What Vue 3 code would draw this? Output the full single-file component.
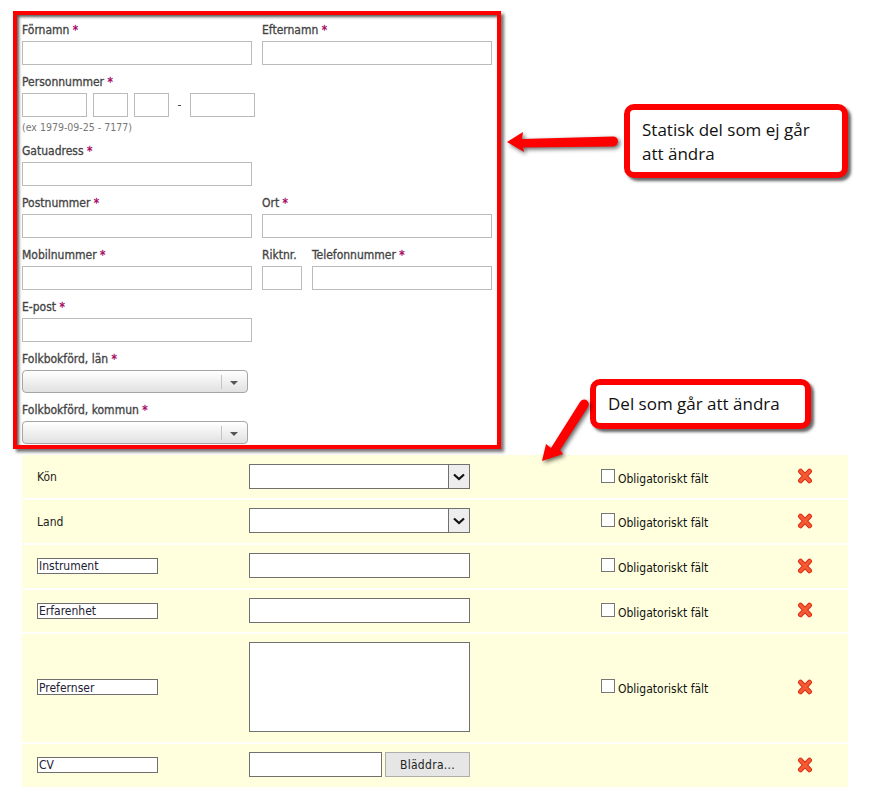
<template>
  <div class="page">
    <form class="static-form" @submit.prevent>
      <div class="form-row">
        <div class="field field--half">
          <label class="field__label">Förnamn <em>*</em></label>
          <input type="text" class="field__input" />
        </div>
        <div class="field field--half">
          <label class="field__label">Efternamn <em>*</em></label>
          <input type="text" class="field__input" />
        </div>
      </div>

      <div class="field field--pnr">
        <label class="field__label">Personnummer <em>*</em></label>
        <div class="pnr">
          <input type="text" class="field__input pnr__year" />
          <input type="text" class="field__input pnr__part" />
          <input type="text" class="field__input pnr__part" />
          <span class="pnr__dash">-</span>
          <input type="text" class="field__input pnr__year" />
        </div>
        <div class="field__hint">(ex 1979-09-25 - 7177)</div>
      </div>

      <div class="field field--half">
        <label class="field__label">Gatuadress <em>*</em></label>
        <input type="text" class="field__input" />
      </div>

      <div class="form-row">
        <div class="field field--half">
          <label class="field__label">Postnummer <em>*</em></label>
          <input type="text" class="field__input" />
        </div>
        <div class="field field--half">
          <label class="field__label">Ort <em>*</em></label>
          <input type="text" class="field__input" />
        </div>
      </div>

      <div class="form-row">
        <div class="field field--half">
          <label class="field__label">Mobilnummer <em>*</em></label>
          <input type="text" class="field__input" />
        </div>
        <div class="field field--area">
          <label class="field__label">Riktnr.</label>
          <input type="text" class="field__input" />
        </div>
        <div class="field field--phone">
          <label class="field__label">Telefonnummer <em>*</em></label>
          <input type="text" class="field__input" />
        </div>
      </div>

      <div class="field field--half">
        <label class="field__label">E-post <em>*</em></label>
        <input type="text" class="field__input" />
      </div>

      <div v-for="name in dropdowns" :key="name" class="field field--drop">
        <label class="field__label">{{ name }} <em>*</em></label>
        <div class="dropdown">
          <span class="dropdown__arrow"></span>
        </div>
      </div>
    </form>

    <div class="editable">
      <div
        v-for="row in rows"
        :key="row.id"
        class="editable__row"
        :class="'editable__row--' + row.id"
      >
        <div class="editable__name">
          <span v-if="row.fixed">{{ row.name }}</span>
          <input v-else type="text" class="name-input" :value="row.name" />
        </div>

        <div class="editable__control">
          <div v-if="row.type === 'select'" class="native-select">
            <span class="native-select__btn">
              <svg width="14" height="8" viewBox="0 0 14 8">
                <path d="M2 1.500 7 6 12 1.500" fill="none" stroke="#111" stroke-width="2.200" />
              </svg>
            </span>
          </div>
          <input v-else-if="row.type === 'text'" type="text" class="native-input" />
          <textarea v-else-if="row.type === 'area'" class="native-area"></textarea>
          <div v-else class="file-pick">
            <input type="text" class="native-input file-pick__text" />
            <button type="button" class="file-pick__btn">Bläddra...</button>
          </div>
        </div>

        <label class="editable__check">
          <template v-if="row.type !== 'file'">
            <input type="checkbox" class="check" />
            <span>Obligatoriskt fält</span>
          </template>
        </label>

        <svg class="remove" width="16" height="16" viewBox="0 0 16 16">
          <path d="M3.500 3.200 12.500 12.800M12.500 3.200 3.500 12.800" fill="none" stroke="#d8301a" stroke-width="5" stroke-linecap="round" />
          <path d="M3.500 3.200 12.500 12.800M12.500 3.200 3.500 12.800" fill="none" stroke="#f65a32" stroke-width="3" stroke-linecap="round" />
        </svg>
      </div>
    </div>

    <div class="callout callout--static">Statisk del som ej går att ändra</div>
    <div class="callout callout--edit">Del som går att ändra</div>

    <svg class="arrow arrow--left" width="120" height="30" viewBox="0 0 120 30">
      <path d="M2 17 18 7 17 14 108 11.500Q112.500 11.500 113 16Q112.500 21 108 21.500L18 22.500 19 27Z" fill="#f00" />
    </svg>
    <svg class="arrow arrow--down" width="56" height="70" viewBox="0 0 56 70">
      <path d="M4 66 8 49 13 53 42 7Q45 3 49 5.500Q52 8 50 12L22 55 25 59Z" fill="#f00" />
    </svg>
  </div>
</template>

<script setup>
const dropdowns = ['Folkbokförd, län', 'Folkbokförd, kommun'];

const rows = [
  { id: 'kon', name: 'Kön', fixed: true, type: 'select' },
  { id: 'land', name: 'Land', fixed: true, type: 'select' },
  { id: 'instrument', name: 'Instrument', type: 'text' },
  { id: 'erfarenhet', name: 'Erfarenhet', type: 'text' },
  { id: 'prefer', name: 'Prefernser', type: 'area' },
  { id: 'cv', name: 'CV', type: 'file' }
];
</script>

<style>
body {
  background: #fff;
}
</style>

<style scoped>
.page {
  position: relative;
  width: 886px;
  height: 798px;
  overflow: hidden;
  padding-top: 11px;
  box-sizing: border-box;
  font-family: "DejaVu Sans Condensed", "DejaVu Sans", sans-serif;
  font-size: 12px;
  color: #222;
}

.static-form {
  box-sizing: border-box;
  width: 488px;
  height: 438px;
  margin-left: 13px;
  padding: 7px 5px 0;
  background: #fff;
  border: 4px solid #f00;
  box-shadow: 3px 3px 3px rgba(0, 0, 0, .55), inset 2px 2px 3px rgba(0, 0, 0, .65);
}

.form-row {
  display: flex;
  gap: 10px;
}

.field {
  margin-bottom: 9px;
}

.field--half {
  width: 230px;
}

.field--area {
  width: 40px;
}

.field--phone {
  width: 180px;
}

.field--pnr {
  margin-bottom: 8px;
}

.field__label {
  display: block;
  height: 16px;
  margin-bottom: 3px;
  line-height: 17px;
  color: #444;
  white-space: nowrap;
  -webkit-text-stroke: .3px #444;
}

.field__label em {
  font-style: normal;
  color: #a5005f;
  -webkit-text-stroke: .3px #a5005f;
}

.field__input {
  display: block;
  box-sizing: border-box;
  width: 100%;
  height: 24px;
  margin: 0;
  background: #fff;
  border: 1px solid #bbb;
}

.field__hint {
  margin-top: 2px;
  font-size: 10.500px;
  line-height: 16px;
  color: #777;
}

.pnr {
  display: flex;
  align-items: center;
}

.pnr .pnr__year {
  width: 65px;
}

.pnr .pnr__part {
  width: 35px;
  margin-left: 6px;
}

.pnr .pnr__dash {
  width: 21px;
  text-align: center;
  color: #444;
}

.dropdown {
  position: relative;
  box-sizing: border-box;
  width: 226px;
  height: 23px;
  background: linear-gradient(#fff, #e1e1e1);
  border: 1px solid #a5a5a5;
  border-radius: 4px;
}

.dropdown__arrow {
  position: absolute;
  top: 4px;
  right: 25px;
  width: 1px;
  height: 14px;
  background: #c4c4c4;
}

.dropdown__arrow::after {
  content: "";
  position: absolute;
  top: 6px;
  left: 9px;
  border-top: 4px solid #555;
  border-left: 4px solid transparent;
  border-right: 4px solid transparent;
}

.editable {
  display: flex;
  flex-direction: column;
  gap: 2px;
  width: 826px;
  margin: 6px 0 0 22px;
}

.editable__row {
  display: flex;
  align-items: center;
  padding: 8px 0 10px 15px;
  background: #ffd;
}

.editable__row--kon {
  padding: 9px 0 9px 15px;
}

.editable__row--erfarenhet {
  padding-bottom: 9px;
}

.editable__row--land .editable__name span {
  position: relative;
  top: 1px;
}

.editable__row--land .remove,
.editable__row--instrument .remove,
.editable__row--cv .remove {
  margin-top: 1px;
}

.editable__name {
  width: 212px;
  flex: none;
  color: #222;
}

.name-input {
  display: block;
  box-sizing: border-box;
  width: 121px;
  height: 16px;
  padding: 1px 1px 0;
  border: 1px solid #6f6f6f;
  background: #fff;
  font: inherit;
  color: #223;
}

.editable__control {
  width: 352px;
  flex: none;
}

.native-select {
  display: flex;
  justify-content: flex-end;
  box-sizing: border-box;
  width: 221px;
  height: 25px;
  background: #fff;
  border: 1px solid #707070;
}

.native-select__btn {
  display: flex;
  align-items: center;
  justify-content: center;
  width: 20px;
  background: #ededed;
  border-left: 1px solid #707070;
}

.native-input {
  display: block;
  box-sizing: border-box;
  width: 221px;
  height: 25px;
  margin: 0;
  background: #fff;
  border: 1px solid #707070;
}

.native-area {
  display: block;
  box-sizing: border-box;
  width: 221px;
  height: 90px;
  margin: 0;
  background: #fff;
  border: 1px solid #707070;
  resize: none;
}

.file-pick {
  display: flex;
  gap: 3px;
}

.file-pick .file-pick__text {
  width: 133px;
}

.file-pick__btn {
  box-sizing: border-box;
  width: 85px;
  height: 25px;
  padding: 0;
  background: #e6e6e6;
  border: 1px solid #adadad;
  font: inherit;
  letter-spacing: .3px;
  color: #222;
}

.editable__check {
  display: flex;
  align-items: center;
  gap: 3px;
  width: 196px;
  flex: none;
  color: #111;
}

.editable__check span {
  padding-top: 4px;
}

.check {
  width: 14px;
  height: 14px;
  margin: 0 0 2px;
  appearance: none;
  background: #fff;
  border: 1px solid #767676;
}

.remove {
  flex: none;
  margin-top: -1px;
}

.callout {
  position: absolute;
  box-sizing: border-box;
  padding: 0 12px;
  background: #fff;
  border: 6px solid #f00;
  border-radius: 10px;
  box-shadow: 3px 3px 3px rgba(0, 0, 0, .6);
  font-family: "Open Sans", sans-serif;
  font-size: 17px;
  line-height: 24px;
  color: #111;
}

.callout--static {
  top: 104px;
  left: 624px;
  width: 224px;
  height: 74px;
  padding-top: 8px;
}

.callout--edit {
  top: 379px;
  left: 590px;
  width: 221px;
  height: 50px;
  padding-top: 7px;
}

.arrow {
  position: absolute;
  pointer-events: none;
  filter: drop-shadow(2px 2px 2px rgba(0, 0, 0, .6));
}

.arrow--left {
  top: 125px;
  left: 505px;
}

.arrow--down {
  top: 395px;
  left: 538px;
}
</style>
